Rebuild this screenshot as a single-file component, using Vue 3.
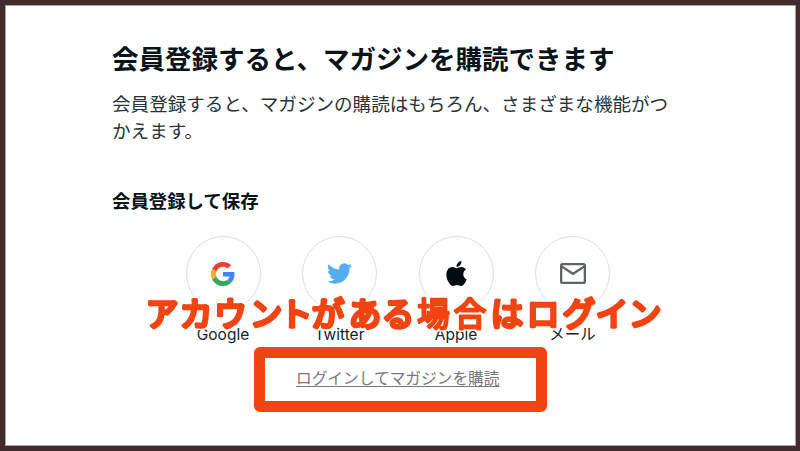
<template>
  <div class="screen">
    <main class="content">
      <h1>会員登録すると、マガジンを購読できます</h1>
      <p class="lead">会員登録すると、マガジンの購読はもちろん、さまざまな機能がつ<br>かえます。</p>
      <h2>会員登録して保存</h2>
      <div class="providers">
        <button v-for="item in providers" :key="item.id" class="provider">
          <span class="circle">
            <svg v-if="item.id === 'google'" width="24" height="24" viewBox="0 0 48 48">
              <path fill="#4285f4" d="M46.98 24.55c0-1.57-.15-3.09-.38-4.55H24v9.02h12.94c-.58 2.96-2.26 5.48-4.78 7.18l7.73 6c4.51-4.18 7.09-10.36 7.09-17.65z" />
              <path fill="#34a853" d="M24 48c6.48 0 11.93-2.13 15.89-5.81l-7.73-6c-2.15 1.45-4.92 2.3-8.16 2.3-6.26 0-11.57-4.22-13.47-9.91l-7.98 6.19C6.51 42.62 14.62 48 24 48z" />
              <path fill="#fbab2b" d="M10.53 28.59a14.5 14.5 0 0 1 0-9.18l-7.98-6.19a24 24 0 0 0 0 21.56z" />
              <path fill="#ea4335" d="M24 9.5c3.54 0 6.71 1.22 9.21 3.6l6.85-6.85C35.9 2.38 30.47 0 24 0 14.62 0 6.51 5.38 2.56 13.22l7.98 6.19C12.43 13.72 17.74 9.5 24 9.5z" />
            </svg>
            <svg v-else-if="item.id === 'twitter'" width="25" height="25" viewBox="0 0 24 24">
              <path fill="#55acee" d="M23.953 4.57a10 10 0 0 1-2.825.775 4.958 4.958 0 0 0 2.163-2.723c-.951.555-2.005.959-3.127 1.184a4.92 4.92 0 0 0-8.384 4.482C7.69 8.095 4.067 6.13 1.64 3.162a4.822 4.822 0 0 0-.666 2.475c0 1.71.87 3.213 2.188 4.096a4.904 4.904 0 0 1-2.228-.616v.06a4.923 4.923 0 0 0 3.946 4.827 4.996 4.996 0 0 1-2.212.085 4.936 4.936 0 0 0 4.604 3.417 9.867 9.867 0 0 1-6.102 2.105c-.39 0-.779-.023-1.17-.067a13.995 13.995 0 0 0 7.557 2.209c9.053 0 13.998-7.496 13.998-13.985 0-.21 0-.42-.015-.63A9.935 9.935 0 0 0 24 4.59z" />
            </svg>
            <svg v-else-if="item.id === 'apple'" width="25" height="25" viewBox="0 0 24 24">
              <path fill="#000c12" d="M12.152 6.896c-.948 0-2.415-1.078-3.96-1.04-2.04.027-3.91 1.183-4.961 3.014-2.117 3.675-.546 9.103 1.519 12.09 1.013 1.454 2.208 3.09 3.792 3.039 1.52-.065 2.09-.987 3.935-.987 1.831 0 2.35.987 3.96.948 1.637-.026 2.676-1.48 3.676-2.948 1.156-1.688 1.636-3.325 1.662-3.415-.039-.013-3.182-1.221-3.22-4.857-.026-3.04 2.48-4.494 2.597-4.559-1.429-2.09-3.623-2.324-4.39-2.376-2-.156-3.675 1.09-4.61 1.09zM15.53 3.83c.843-1.012 1.4-2.427 1.245-3.83-1.207.052-2.662.805-3.532 1.818-.78.896-1.454 2.338-1.273 3.714 1.338.104 2.715-.688 3.559-1.701" />
            </svg>
            <svg v-else width="26" height="21" viewBox="0 0 26 21" fill="none" stroke="#5d6366" stroke-width="2.3">
              <rect x="1.15" y="1.15" width="23.7" height="18.7" rx="1.4" />
              <path d="M1.6 3.4l11.4 7.4 11.4-7.4" />
            </svg>
          </span>
          <span class="name">{{ item.name }}</span>
        </button>
      </div>
      <a class="login">ログインしてマガジンを購読</a>
    </main>

    <svg class="callout" width="530" height="60" viewBox="0 0 530 60">
      <text class="letters" :x="letterX" y="41">アカウントがある<tspan class="kanji">場合</tspan>はログイン</text>
    </svg>
    <div class="marker"></div>
  </div>
</template>

<script setup>
const providers = [
  { id: 'google', name: 'Google' },
  { id: 'twitter', name: 'Twitter' },
  { id: 'apple', name: 'Apple' },
  { id: 'mail', name: 'メール' }
];

// centre of each letter
const letterX = '22 56 90.5 126 156 188 225 258 293.5 330 367 403 439 472 505';
</script>

<style>
body {
  margin: 0;
}
</style>

<style scoped>
.screen {
  position: relative;
  box-sizing: border-box;
  width: 800px;
  height: 451px;
  overflow: hidden;
  border: 5px solid #402c2f;
  border-right-width: 4px;
  background: #fff;
  box-shadow: inset 0 0 0 1px #aaa2a4;
  color: #08131a;
  font-family: Inter, "Noto Sans CJK JP", sans-serif;
}

.content {
  display: flex;
  flex-direction: column;
  padding: 34px 0 0 107px;
}

h1 {
  margin: 0;
  font-size: 26.5px;
  font-weight: 700;
  line-height: 38px;
  font-family: "Noto Sans CJK JP", sans-serif;
  white-space: nowrap;
}

.lead {
  margin: 12px 0 0;
  color: #27333a;
  font-size: 18.57px;
  line-height: 27px;
  font-family: "Noto Sans CJK JP", sans-serif;
  white-space: nowrap;
}

h2 {
  margin: 44px 0 0;
  font-size: 18.4px;
  font-weight: 700;
  line-height: 27px;
  font-family: "Noto Sans CJK JP", sans-serif;
}

.providers {
  display: flex;
  gap: 41.5px;
  margin: 22px 0 0 73.5px;
}

.provider {
  display: flex;
  flex-direction: column;
  align-items: center;
  width: 75px;
  padding: 0;
  border: none;
  background: none;
  color: #17232c;
  font-family: inherit;
}

.circle {
  display: flex;
  align-items: center;
  justify-content: center;
  box-sizing: border-box;
  width: 75px;
  height: 75px;
  border: 1px solid #dedede;
  border-radius: 50%;
}

.name {
  margin-top: 13px;
  font-size: 15.5px;
  line-height: 22px;
}

.login {
  align-self: flex-start;
  margin: 20px 0 0 184px;
  color: #74797c;
  font-size: 15.7px;
  line-height: 24px;
  font-family: "Noto Sans CJK JP", sans-serif;
  text-decoration: underline;
  text-decoration-thickness: 1px;
  text-underline-offset: 2px;
}

.callout {
  position: absolute;
  left: 135px;
  top: 280px;
  filter: drop-shadow(2px 0 0 #fff) drop-shadow(-2px 0 0 #fff) drop-shadow(0 1.5px 0 #fff) drop-shadow(0 -2px 0 #fff);
}

.letters {
  font-family: "Noto Sans CJK JP", sans-serif;
  font-size: 32.5px;
  font-weight: 400;
  text-anchor: middle;
  fill: #f04512;
  stroke: #f04512;
  stroke-width: 3.6px;
  stroke-linejoin: round;
  stroke-linecap: round;
}

.kanji {
  stroke-width: 2.5px;
}

.marker {
  position: absolute;
  box-sizing: border-box;
  left: 249px;
  top: 342px;
  width: 293px;
  height: 65px;
  border: 11.5px solid #f04512;
  border-radius: 6px;
}
</style>
